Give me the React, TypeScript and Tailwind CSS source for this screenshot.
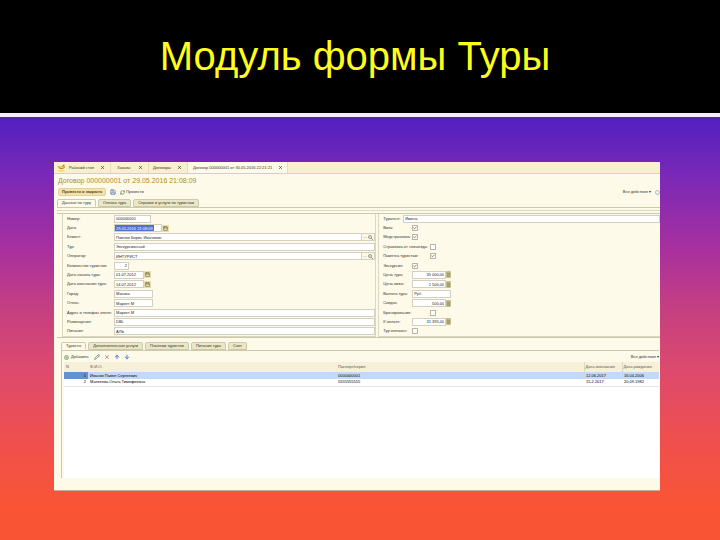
import { Calendar, Check, Plus, Pencil, X, ArrowUp, ArrowDown, Save, RefreshCw } from "lucide-react";
import { clsx } from "clsx";
import { useState } from "react";

type Field = {
  label: string;
  value: string;
  width: string;
  kind?: "date" | "picker";
  selected?: boolean;
};

const fields: Field[] = [
  { label: "Номер:", value: "000000001", width: "w-[37px]" },
  { label: "Дата:", value: "29.05.2016 21:08:09", width: "w-[48px]", kind: "date", selected: true },
  { label: "Клиент:", value: "Павлов Борис Иванович", width: "w-full", kind: "picker" },
  { label: "Тур:", value: "Экскурсионный", width: "w-full" },
  { label: "Оператор:", value: "ИНТУРИСТ", width: "w-full", kind: "picker" },
  { label: "Количество туристов:", value: "2", width: "w-[15px] text-right" },
  { label: "Дата начала тура:", value: "01.07.2012", width: "w-[30px]", kind: "date" },
  { label: "Дата окончания тура:", value: "14.07.2012", width: "w-[30px]", kind: "date" },
  { label: "Город:", value: "Москва", width: "w-[39px]" },
  { label: "Отель:", value: "Маркет М", width: "w-[39px]" },
  { label: "Адрес и телефон отеля:", value: "Маркет М", width: "w-full" },
  { label: "Размещение:", value: "DBL", width: "w-full" },
  { label: "Питание:", value: "АЛЬ", width: "w-full" },
];

type Option = { label: string; value?: string; checked?: boolean; shifted?: boolean };

const options: Option[] = [
  { label: "Виза:", checked: true },
  { label: "Медстраховка:", checked: true },
  { label: "Страховка от невыезда:", checked: false, shifted: true },
  { label: "Памятка туристам:", checked: true, shifted: true },
  { label: "Экскурсия:", checked: true },
  { label: "Цена тура:", value: "35 000,00" },
  { label: "Цена визы:", value: "1 500,00" },
  { label: "Валюта тура:", value: "Руб" },
  { label: "Скидка:", value: "500,00" },
  { label: "Бронирование:", checked: false, shifted: true },
  { label: "К оплате:", value: "31 395,00" },
  { label: "Тур оплачен:", checked: false },
];

const tourists = [
  { id: 1, name: "Иванов Павел Сергеевич", passport: "0000000001", issued: "12.06.2017", born: "16.04.2006" },
  { id: 2, name: "Матвеева Ольга Тимофеевна", passport: "5555555555", issued: "15.2.2017", born: "20.09.1982" },
];

const inputBase = "h-[8px] min-w-0 border border-[#d3d0c0] bg-white px-px leading-none outline-none";

function FieldRow({ label, value, width, kind, selected }: Field) {
  return (
    <label className="flex min-h-0 items-center">
      <span className="w-[47px] shrink-0 whitespace-nowrap">{label}</span>
      <input
        defaultValue={value}
        className={clsx(
          inputBase,
          width,
          selected ? "bg-linear-to-r from-[#4f70cc] from-85% to-white to-85% text-white" : "text-[#222]"
        )}
      />
      {kind === "date" && (
        <span className="flex h-[7px] w-[7px] shrink-0 items-center justify-center bg-[#e6dfad]">
          <Calendar className="size-[5px] text-[#7a7140]" strokeWidth={3} />
        </span>
      )}
      {kind === "picker" && (
        <span className="flex h-[8px] w-[13px] shrink-0 items-center justify-around border border-l-0 border-[#d3d0c0] bg-[#fbf8e6] text-[#555]">
          <span>…</span>
          <svg viewBox="0 0 10 10" className="size-[5px]" fill="none" stroke="currentColor" strokeWidth="1.2">
            <circle cx="4" cy="4" r="3" />
            <path d="M6 6l4 4" />
          </svg>
        </span>
      )}
    </label>
  );
}

function OptionRow({ label, value, checked, shifted }: Option) {
  return (
    <label className="flex min-h-0 items-center">
      <span className={clsx("shrink-0 whitespace-nowrap", shifted ? "w-[47px]" : "w-[29px]")}>{label}</span>
      {value !== undefined ? (
        <>
          <input
            defaultValue={value}
            className={clsx(inputBase, "text-[#222]", value === "Руб" ? "w-[39px]" : "w-[34px] text-right")}
          />
          {value !== "Руб" && (
            <svg viewBox="0 0 10 14" className="h-[7px] w-[5px] bg-[#d9d2a3]" stroke="#857f55" strokeWidth="1" fill="none">
              <path d="M2 2h6v10H2zM2 5h6M4 5v7M6 5v7M2 8h6" />
            </svg>
          )}
        </>
      ) : (
        <span className="relative flex">
          <input
            type="checkbox"
            defaultChecked={checked}
            className="peer size-[6px] appearance-none border border-[#b9b5a2] bg-white"
          />
          <Check className="pointer-events-none absolute inset-px hidden size-[4px] text-[#444] peer-checked:block" strokeWidth={4} />
        </span>
      )}
    </label>
  );
}

function Tabs({ items }: { items: string[] }) {
  const [active, setActive] = useState(0);
  return (
    <div className="flex h-[8px] items-end gap-[2px]">
      {items.map((item, i) => (
        <button
          key={item}
          onClick={() => setActive(i)}
          className={clsx(
            "h-[8px] rounded-t-[2px] border border-[#cdc9ad] px-[4px] leading-[6px]",
            i === active ? "border-b-[#fdfaea] bg-[#fdfaea]" : "bg-[#ebe6c5]"
          )}
        >
          {item}
        </button>
      ))}
    </div>
  );
}

function WindowTabs() {
  const items = ["Рабочий стол", "Заказы", "Договоры", "Договор 000000001 от 30.05.2016 22:21:21"];
  return (
    <div className="flex h-[12px] items-stretch border-b border-[#dcd68e] bg-linear-to-b from-[#faf0d4] to-[#f6f0cc]">
      <svg viewBox="0 0 16 16" className="mr-[3px] ml-[3px] size-[9px] self-center">
        <path d="M2 5h12v8a2 2 0 0 1-2 2H4a2 2 0 0 1-2-2z" fill="#f4d36c" />
        <path d="M2 8l5 4 7-5v6H2z" fill="#fff4c4" />
        <path d="M8 7l5-5v3z" fill="#b2382f" />
        <path d="M2 6c3 5 8 5 12 1" stroke="#8c6732" strokeWidth="1.5" fill="none" />
      </svg>
      {items.map((item, i) => (
        <button
          key={item}
          className={clsx(
            "flex shrink-0 items-center justify-between border-r border-[#e3ddbf] leading-none",
            i === 0 && "w-[42px]",
            i === 1 && "w-[38px] pl-[6px]",
            i === 2 && "w-[39px] pl-[4px]",
            i === 3 ? "w-[100px] bg-[#fdfaea] pr-[4px] pl-[5px]" : "pr-[5px]"
          )}
        >
          <span>{item}</span>
          <X className="size-[5px]" strokeWidth={3} />
        </button>
      ))}
    </div>
  );
}

function TouristTable() {
  return (
    <div className="min-h-[116px] bg-white">
      <table className="w-full table-fixed border-collapse text-left">
        <thead>
          <tr className="h-[10px] bg-[#f5f0d7] text-[#555]">
            <th className="w-[24px] pl-[2px] font-normal">N</th>
            <th className="pl-[2px] font-normal">Ф.И.О.</th>
            <th className="pl-[2px] font-normal">Паспорт/серия</th>
            <th className="w-[38px] border-l border-[#ddd8bb] pl-px font-normal whitespace-nowrap">Дата окончания</th>
            <th className="w-[37px] border-l border-[#ddd8bb] pl-px font-normal whitespace-nowrap">Дата рождения</th>
          </tr>
        </thead>
        <tbody>
          {tourists.map((t, i) => (
            <tr key={t.id} className={clsx("h-[7px] text-black", i === 0 ? "bg-[#c2d9fb]" : "border-b border-[#e4e4e4]")}>
              <td className={clsx("pr-[2px] text-right", i === 0 && "bg-[#6293cf]")}>{t.id}</td>
              <td className="pl-[2px]">{t.name}</td>
              <td className="pl-[2px]">{t.passport}</td>
              <td className="pl-[2px]">{t.issued}</td>
              <td className="pl-[2px]">{t.born}</td>
            </tr>
          ))}
        </tbody>
      </table>
    </div>
  );
}

function ContractWindow() {
  return (
    <main className="border-b border-[#c9a99c] bg-[#fdfaea] pb-[12px] text-[4px] leading-[6px] text-[#33312a]">
      <WindowTabs />
      <h2 className="px-[4px] pt-[2px] text-[7px] leading-[10px] text-[#b08a1c]">
        Договор 000000001 от 29.05.2016 21:08:09
      </h2>
      <div className="mt-[2px] flex items-center gap-[4px] px-[4px]">
        <button className="h-[8px] rounded-[2px] border border-[#e2d19a] bg-[#f2e3ab] px-[3px] leading-[6px] font-bold text-[#4d431d]">
          Провести и закрыть
        </button>
        <button aria-label="Записать">
          <Save className="size-[6px] text-[#5c7fb4]" strokeWidth={3} />
        </button>
        <button className="flex items-center gap-px">
          <RefreshCw className="size-[5px] text-[#5b8a57]" strokeWidth={3} />
          Провести
        </button>
        <button className="ml-auto">Все действия ▾</button>
        <button aria-label="Справка" className="-mr-[4px] size-[5px] rounded-full border border-[#a9bad3]" />
      </div>
      <div className="mt-[3px] pl-[3px]">
        <Tabs items={["Данные по туру", "Оплата тура", "Справки и услуги по туристам"]} />
        <div className="border-y border-[#cdc9ad] pt-[2px]">
          <div className="border-t border-[#dedac2] pt-[2px]">
            <div className="flex gap-[2px] border-t border-[#cdc9ad] pl-[5px]">
              <div className="grid h-[123px] flex-[314] grid-rows-13 border border-t-0 border-[#dad6bf] pl-[4px]">
                {fields.map((f) => (
                  <FieldRow key={f.label} {...f} />
                ))}
              </div>
              <div className="grid h-[123px] flex-[282] grid-rows-13 border border-t-0 border-r-0 border-[#dad6bf] pl-[4px]">
                <label className="flex min-h-0 items-center">
                  <span className="w-[20px] shrink-0">Турагент:</span>
                  <input defaultValue="Имена" className={clsx(inputBase, "w-full text-[#222]")} />
                </label>
                {options.map((o) => (
                  <OptionRow key={o.label} {...o} />
                ))}
              </div>
            </div>
          </div>
        </div>
      </div>
      <div className="mt-[4px] pr-px pl-[7px]">
        <Tabs items={["Туристы", "Дополнительные услуги", "Платежи туристов", "Питание тура", "Счет"]} />
        <div className="border-t border-l border-[#cdc9ad] pt-[3px] pl-[2px]">
          <div className="mb-[2px] flex h-[6px] items-center gap-[4px]">
            <button className="mr-px flex items-center gap-[2px]">
              <Plus className="size-[5px] rounded-full border border-[#87a983] text-[#4f8a48]" strokeWidth={4} />
              Добавить
            </button>
            <button aria-label="Изменить"><Pencil className="size-[6px] text-[#5a9270]" strokeWidth={3} /></button>
            <button aria-label="Удалить"><X className="size-[6px] text-[#d86a61]" strokeWidth={3} /></button>
            <button aria-label="Вверх"><ArrowUp className="size-[6px] text-[#4d83b8]" strokeWidth={4} /></button>
            <button aria-label="Вниз"><ArrowDown className="size-[6px] text-[#4d83b8]" strokeWidth={4} /></button>
            <button className="ml-auto">Все действия ▾</button>
          </div>
          <TouristTable />
        </div>
      </div>
    </main>
  );
}

export default function App() {
  return (
    <div className="flex min-h-screen flex-col bg-black font-['Liberation_Sans',Arial,sans-serif]">
      <header className="flex h-[113px] items-center justify-center pr-[10px] pb-[2px]">
        <h1 className="text-[40px] leading-[48px] text-[#ffff1a]">Модуль формы Туры</h1>
      </header>
      <section className="grow border-t-4 border-[#f4eefa] bg-[linear-gradient(to_bottom,#521fc0_0%,#7828b8_13%,#a8309f_31%,#c43f82_45%,#dd4a6c_60%,#ee4f50_75%,#f95535_92%)] pt-[45px] pr-[60px] pl-[54px]">
        <ContractWindow />
      </section>
    </div>
  );
}
